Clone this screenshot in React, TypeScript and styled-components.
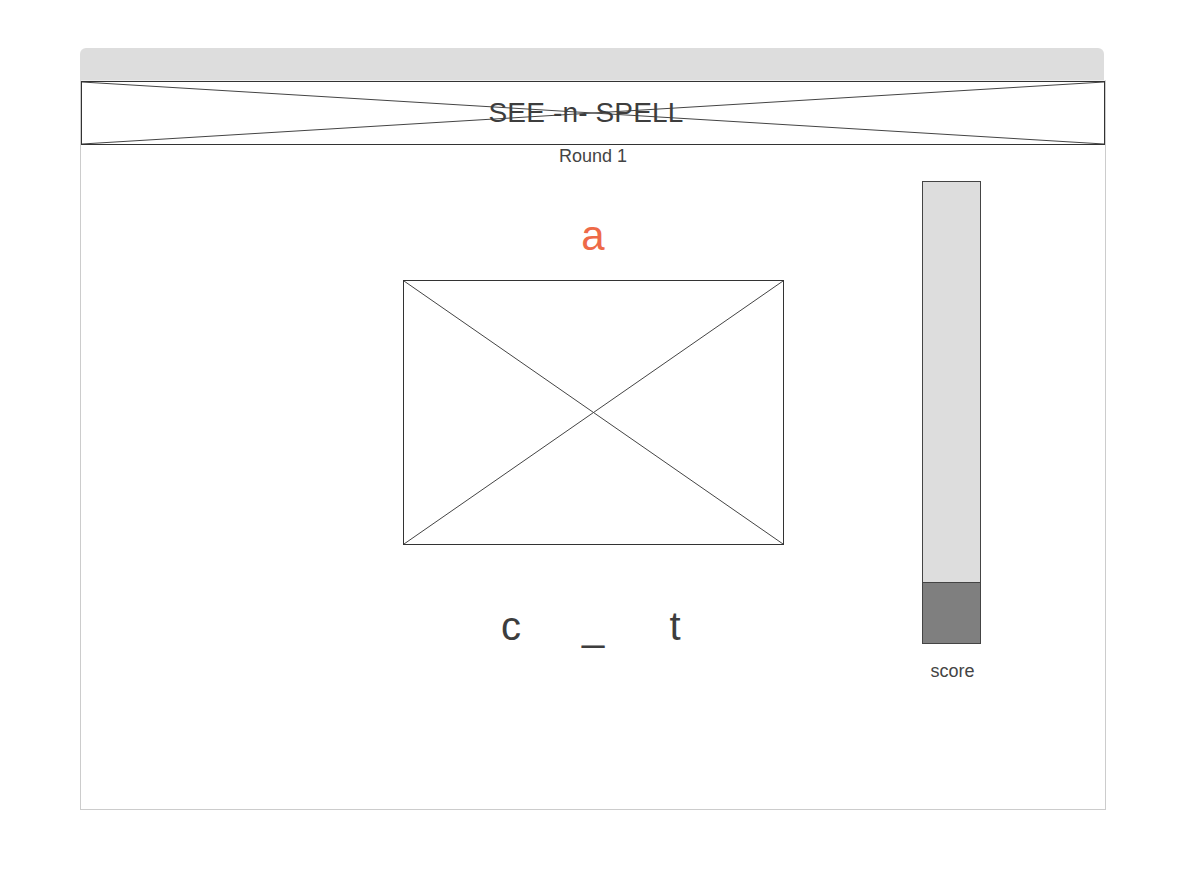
import React from "react";
import styled, { createGlobalStyle } from "styled-components";

const Global = createGlobalStyle`
  html, body { margin: 0; padding: 0; background: #ffffff; }
  body { font-family: "Liberation Sans", Arial, sans-serif; color: #3a3a3a; }
`;

const Page = styled.div`
  padding: 48px 0 0 80px;
`;

const Window = styled.div`
  width: 1026px;
  display: flex;
  flex-direction: column;
`;

const TitleBar = styled.div`
  width: 1024px;
  height: 32px;
  background: #dddddd;
  border-radius: 6px 6px 0 0;
`;

const Body = styled.div`
  height: 730px;
  box-sizing: border-box;
  border: 1px solid #cccccc;
  border-top: 1px solid #eeeeee;
  display: flex;
  flex-direction: column;
`;

const Banner = styled.div`
  position: relative;
  height: 64px;
  box-sizing: border-box;
  border: 1px solid #333333;
  display: flex;
  align-items: center;
  justify-content: center;
`;

const Cross = styled.svg`
  position: absolute;
  inset: 0;
  width: 100%;
  height: 100%;
`;

const Title = styled.h1`
  position: relative;
  margin: 0;
  padding: 0 14px 0 0;
  font-size: 28px;
  font-weight: 400;
  line-height: 32px;
  letter-spacing: 0.15px;
  color: #3d3d3d;
`;

const RoundLabel = styled.div`
  height: 20px;
  margin-top: 1px;
  line-height: 20px;
  font-size: 18px;
  text-align: center;
  color: #444444;
`;

const Main = styled.div`
  display: grid;
  grid-template-columns: 1fr 381px 1fr;
  margin-top: 15px;
`;

const Center = styled.div`
  display: flex;
  flex-direction: column;
  align-items: center;
  padding-top: 31px;
`;

const Answer = styled.div`
  font-size: 42px;
  line-height: 48px;
  color: #ee6a48;
`;

const Placeholder = styled.div`
  position: relative;
  width: 381px;
  height: 265px;
  margin-top: 20px;
  box-sizing: border-box;
  border: 1px solid #333333;
`;

const Word = styled.div`
  display: flex;
  margin-top: 57px;
`;

const Slot = styled.span`
  width: 82px;
  text-align: center;
  font-size: 40px;
  line-height: 48px;
  color: #3d3d3d;
`;

const ScoreColumn = styled.div`
  display: flex;
  flex-direction: column;
  align-items: center;
  width: 59px;
  margin-left: 138px;
`;

const ScoreBar = styled.div`
  width: 59px;
  height: 463px;
  box-sizing: border-box;
  border: 1px solid #444444;
  background: #dddddd;
  display: flex;
  flex-direction: column;
  justify-content: flex-end;
`;

const ScoreFill = styled.div`
  background: #7f7f7f;
  border-top: 1px solid #444444;
`;

const ScoreLabel = styled.div`
  margin-top: 17px;
  padding-left: 3px;
  font-size: 18px;
  line-height: 20px;
  color: #444444;
`;

const XLines: React.FC = () => (
  <Cross viewBox="0 0 100 100" preserveAspectRatio="none">
    <line x1="0" y1="0" x2="100" y2="100" stroke="#444" strokeWidth="1" vectorEffect="non-scaling-stroke" />
    <line x1="100" y1="0" x2="0" y2="100" stroke="#444" strokeWidth="1" vectorEffect="non-scaling-stroke" />
  </Cross>
);

export default function App() {
  const score = 0.13;
  return (
    <>
      <Global />
      <Page>
        <Window>
          <TitleBar />
          <Body>
            <Banner>
              <XLines />
              <Title>SEE -n- SPELL</Title>
            </Banner>
            <RoundLabel>Round 1</RoundLabel>
            <Main>
              <div />
              <Center>
                <Answer>a</Answer>
                <Placeholder>
                  <XLines />
                </Placeholder>
                <Word>
                  <Slot>c</Slot>
                  <Slot>_</Slot>
                  <Slot>t</Slot>
                </Word>
              </Center>
              <ScoreColumn>
                <ScoreBar>
                  <ScoreFill style={{ height: `${Math.round(461 * score)}px` }} />
                </ScoreBar>
                <ScoreLabel>score</ScoreLabel>
              </ScoreColumn>
            </Main>
          </Body>
        </Window>
      </Page>
    </>
  );
}
